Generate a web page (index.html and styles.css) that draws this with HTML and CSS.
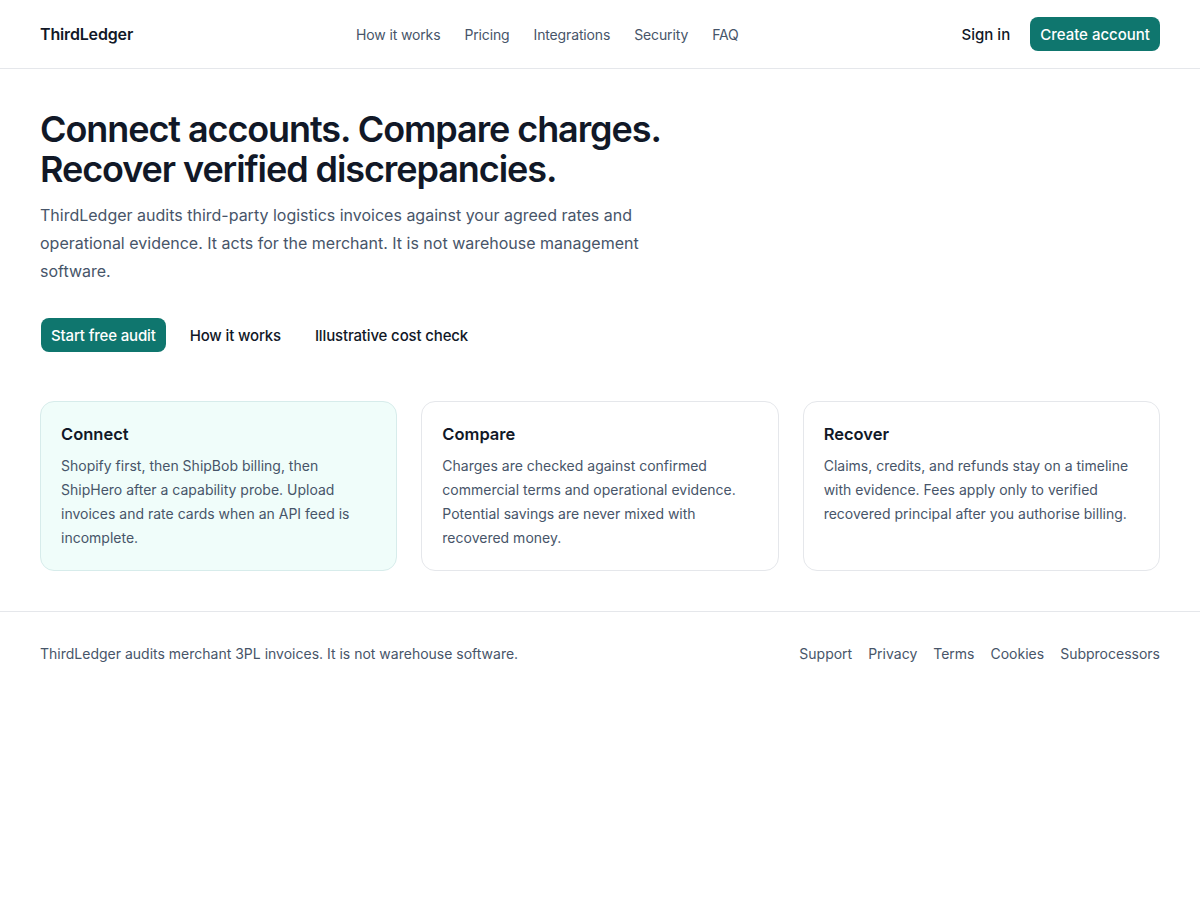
FILE: index.html
```html
<!DOCTYPE html>
<html lang="en">
<head>
<meta charset="utf-8">
<title>ThirdLedger — 3PL invoice audits for merchants</title>
<link rel="stylesheet" href="styles.css">
</head>
<body>
<header class="site-header">
  <a class="brand" href="#">ThirdLedger</a>
  <nav class="main-nav">
    <a href="#">How it works</a>
    <a href="#">Pricing</a>
    <a href="#">Integrations</a>
    <a href="#">Security</a>
    <a href="#">FAQ</a>
  </nav>
  <div class="header-actions">
    <a class="link-strong" href="#">Sign in</a>
    <a class="btn btn-primary" href="#">Create account</a>
  </div>
</header>

<main class="page">
  <section class="hero">
    <h1>Connect accounts. Compare charges.<br>Recover verified discrepancies.</h1>
    <p class="lead">ThirdLedger audits third-party logistics invoices against your agreed rates and operational evidence. It acts for the merchant. It is not warehouse management software.</p>
    <div class="cta-row">
      <a class="btn btn-primary" href="#">Start free audit</a>
      <a class="btn btn-ghost" href="#">How it works</a>
      <a class="btn btn-ghost" href="#">Illustrative cost check</a>
    </div>
  </section>

  <section class="steps">
    <article class="step step-active">
      <h2>Connect</h2>
      <p>Shopify first, then ShipBob billing, then ShipHero after a capability probe. Upload invoices and rate cards when an API feed is incomplete.</p>
    </article>
    <article class="step">
      <h2>Compare</h2>
      <p>Charges are checked against confirmed commercial terms and operational evidence. Potential savings are never mixed with recovered money.</p>
    </article>
    <article class="step">
      <h2>Recover</h2>
      <p>Claims, credits, and refunds stay on a timeline with evidence. Fees apply only to verified recovered principal after you authorise billing.</p>
    </article>
  </section>
</main>

<footer class="site-footer">
  <p>ThirdLedger audits merchant 3PL invoices. It is not warehouse software.</p>
  <nav class="footer-nav">
    <a href="#">Support</a>
    <a href="#">Privacy</a>
    <a href="#">Terms</a>
    <a href="#">Cookies</a>
    <a href="#">Subprocessors</a>
  </nav>
</footer>
</body>
</html>
```

FILE: styles.css
```css
* { box-sizing: border-box; }

body {
  margin: 0;
  font-family: Inter, "Noto Sans", sans-serif;
  color: #111827;
  background: #fff;
}

a { color: inherit; text-decoration: none; }

/* Header */
.site-header {
  display: flex;
  align-items: center;
  justify-content: space-between;
  height: 69px;
  padding: 0 40px;
  border-bottom: 1px solid #e5e7eb;
}

.brand {
  font-size: 16px;
  font-weight: 600;
  letter-spacing: -0.01em;
  color: #111827;
}

.main-nav {
  display: flex;
  gap: 24px;
  font-size: 14px;
  letter-spacing: -0.01em;
  color: #475569;
}

.header-actions {
  display: flex;
  align-items: center;
  gap: 20px;
  font-size: 15px;
}

.link-strong { font-weight: 500; color: #111827; }

/* Buttons */
.btn {
  display: inline-flex;
  align-items: center;
  height: 34px;
  padding: 0 10px;
  border-radius: 8px;
  font-size: 15px;
  font-weight: 500;
}

.btn-primary {
  background: #0f766e;
  color: #fff;
}

.btn-ghost { color: #111827; }

/* Hero */
.page { padding: 40px 40px 40px; }

.hero { max-width: 680px; }

.hero h1 {
  margin: 0;
  font-size: 36px;
  line-height: 40px;
  font-weight: 600;
  letter-spacing: -0.03em;
  color: #111827;
}

.lead {
  max-width: 660px;
  margin: 12px 0 0;
  font-size: 16px;
  line-height: 28px;
  color: #475569;
}

.cta-row {
  display: flex;
  gap: 14px;
  margin-top: 33px;
}

.cta-row .btn { letter-spacing: -0.01em; }
.cta-row .btn-primary { margin-left: 1px; }

/* Steps */
.steps {
  display: grid;
  grid-template-columns: repeat(3, 1fr);
  gap: 24px;
  margin-top: 49px;
}

.step {
  padding: 20px;
  border: 1px solid #e5e7eb;
  border-radius: 14px;
  background: #fff;
}

.step-active {
  background: #f0fdfa;
  border-color: #d7eceb;
}

.step h2 {
  margin: 0;
  font-size: 16.5px;
  line-height: 24px;
  font-weight: 600;
  color: #111827;
}

.step p {
  margin: 8px 0 0;
  font-size: 14px;
  line-height: 24px;
  color: #475569;
}

/* Footer */
.site-footer {
  display: flex;
  align-items: center;
  justify-content: space-between;
  padding: 32px 40px;
  border-top: 1px solid #e5e7eb;
  font-size: 14px;
  line-height: 20px;
  color: #475569;
}

.site-footer p { margin: 0; }

.footer-nav {
  display: flex;
  gap: 16px;
}
```
